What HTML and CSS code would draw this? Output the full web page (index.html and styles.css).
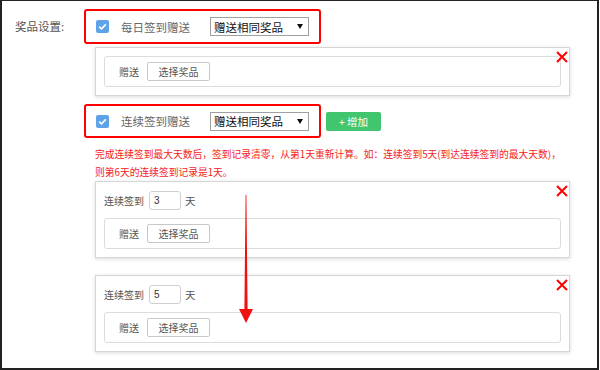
FILE: index.html
```html
<!DOCTYPE html>
<html lang="zh-CN">
<head>
  <meta charset="UTF-8">
  <meta name="viewport" content="width=device-width, initial-scale=1.0">
  <title>奖品设置</title>
  <link rel="stylesheet" href="styles.css">
</head>
<body>
  <div class="frame">
    <div class="setting">
      <div class="setting-label">奖品设置:</div>

      <div class="setting-body">
        <!-- Daily sign-in -->
        <div class="mark-row">
          <span class="check">
            <svg width="13" height="13" viewBox="0 0 13 13"><path d="M3.2 6.6 L5.5 8.8 L9.8 4.4" fill="none" stroke="#fff" stroke-width="1.6"/></svg>
          </span>
          <span class="mark-text">每日签到赠送</span>
          <div class="fake-select">
            <span>赠送相同奖品</span>
            <svg width="6" height="5" viewBox="0 0 6 5"><path d="M0 0 H6 L3 5 Z" fill="#111"/></svg>
          </div>
        </div>

        <div class="panel panel-first">
          <div class="gift-box">
            <span class="gift-label">赠送</span>
            <button class="pick-btn">选择奖品</button>
          </div>
          <span class="close">
            <svg width="12" height="12" viewBox="0 0 12 12"><path d="M1 1 L11 11 M11 1 L1 11" stroke="#f00" stroke-width="2"/></svg>
          </span>
        </div>

        <!-- Continuous sign-in -->
        <div class="row-with-add">
          <div class="mark-row mark-row-second">
            <span class="check">
              <svg width="13" height="13" viewBox="0 0 13 13"><path d="M3.2 6.6 L5.5 8.8 L9.8 4.4" fill="none" stroke="#fff" stroke-width="1.6"/></svg>
            </span>
            <span class="mark-text">连续签到赠送</span>
            <div class="fake-select">
              <span>赠送相同奖品</span>
              <svg width="6" height="5" viewBox="0 0 6 5"><path d="M0 0 H6 L3 5 Z" fill="#111"/></svg>
            </div>
          </div>
          <button class="add-btn">+ 增加</button>
        </div>

        <p class="tip">完成连续签到最大天数后，签到记录清零，从第1天重新计算。如：连续签到5天(到达连续签到的最大天数)，<br>则第6天的连续签到记录是1天。</p>

        <div class="panel">
          <div class="days-row">
            <span>连续签到</span>
            <span class="days-input">3</span>
            <span class="days-unit">天</span>
          </div>
          <div class="gift-box">
            <span class="gift-label">赠送</span>
            <button class="pick-btn">选择奖品</button>
          </div>
          <span class="close">
            <svg width="12" height="12" viewBox="0 0 12 12"><path d="M1 1 L11 11 M11 1 L1 11" stroke="#f00" stroke-width="2"/></svg>
          </span>
        </div>

        <div class="panel panel-last">
          <div class="days-row">
            <span>连续签到</span>
            <span class="days-input">5</span>
            <span class="days-unit">天</span>
          </div>
          <div class="gift-box">
            <span class="gift-label">赠送</span>
            <button class="pick-btn">选择奖品</button>
          </div>
          <span class="close">
            <svg width="12" height="12" viewBox="0 0 12 12"><path d="M1 1 L11 11 M11 1 L1 11" stroke="#f00" stroke-width="2"/></svg>
          </span>
        </div>
      </div>
    </div>

    <!-- annotation arrow drawn over the panels -->
    <svg class="arrow" width="600" height="370" viewBox="0 0 600 370">
      <polygon points="245.6,195 246.4,195 247.6,309 253,309 246,323 239,309 244.4,309" fill="#f01010"/>
    </svg>
  </div>
</body>
</html>
```

FILE: styles.css
```css
body {
  margin: 0;
  background: #fff;
  font-family: "Noto Sans CJK SC", "Noto Sans", sans-serif;
  color: #555;
}

/* Outer screenshot frame */
.frame {
  position: relative;
  width: 599px;
  height: 370px;
  box-sizing: border-box;
  border: 2px solid #222;
  border-top-width: 1px;
  overflow: hidden;
}

.setting {
  display: flex;
  padding-top: 8px;
}

.setting-label {
  width: 69px;
  padding-left: 13px;
  height: 35px;
  line-height: 35px;
  font-size: 11.5px;
  color: #555;
}

.setting-body {
  width: 490px;
}

/* Rows outlined in red */
.mark-row {
  display: flex;
  align-items: center;
  width: 237px;
  height: 35px;
  box-sizing: border-box;
  border: 2px solid #f00;
  border-radius: 3px;
  padding-left: 10px;
}

.mark-row-second {
  height: 34px;
}

.check {
  display: block;
  width: 13px;
  height: 13px;
  background: #5ea3e8;
  border-radius: 2px;
}

.check svg {
  display: block;
}

.mark-text {
  margin-left: 12px;
  font-size: 11.5px;
  line-height: 14px;
  color: #666;
}

.fake-select {
  display: flex;
  align-items: center;
  justify-content: space-between;
  margin-left: 20px;
  width: 99px;
  height: 19px;
  box-sizing: border-box;
  border: 1px solid #a0a0a0;
  padding: 0 5px 0 3px;
  font-size: 11.5px;
  line-height: 14px;
  color: #111;
}

.fake-select svg {
  display: block;
}

.row-with-add {
  display: flex;
  align-items: center;
  margin-top: 8px;
}

.add-btn {
  margin-left: 5px;
  width: 55px;
  height: 19px;
  padding: 0;
  border: none;
  border-radius: 2px;
  background: #41c66f;
  color: #fff;
  font-family: inherit;
  font-size: 10.5px;
  line-height: 19px;
}

/* Panels */
.panel {
  position: relative;
  margin-left: 11px;
  width: 475px;
  box-sizing: border-box;
  border: 1px solid #d6d6d6;
  box-shadow: 0 1px 4px rgba(0, 0, 0, 0.15);
  padding: 8px;
  background: #fff;
}

.panel-first {
  margin-top: 3px;
}

.panel-last {
  margin-top: 17px;
}

.close {
  position: absolute;
  top: 3px;
  right: 1px;
}

.close svg {
  display: block;
}

.gift-box {
  display: flex;
  align-items: center;
  height: 31px;
  box-sizing: border-box;
  border: 1px solid #dcdcdc;
  border-radius: 3px;
  padding-left: 14px;
}

.gift-label {
  font-size: 10px;
  line-height: 12px;
  color: #555;
}

.pick-btn {
  margin-left: 8px;
  width: 63px;
  height: 19px;
  padding: 0;
  border: 1px solid #c8c8c8;
  border-radius: 2px;
  background: #fff;
  color: #555;
  font-family: inherit;
  font-size: 10px;
  line-height: 17px;
}

.days-row {
  display: flex;
  align-items: center;
  height: 19px;
  margin-top: 1px;
  margin-bottom: 8px;
  font-size: 10px;
  line-height: 12px;
  color: #555;
}

.days-input {
  margin-left: 5px;
  width: 32px;
  height: 19px;
  box-sizing: border-box;
  border: 1px solid #cfcfcf;
  border-radius: 3px;
  padding-left: 4px;
  line-height: 17px;
  font-family: "Liberation Sans", sans-serif;
  color: #333;
}

.days-unit {
  margin-left: 4px;
  font-size: 10.5px;
}

/* Red hint text */
.tip {
  margin: 7px 0 0 11px;
  font-size: 9.75px;
  line-height: 18px;
  color: #f41c1c;
  white-space: nowrap;
}

.arrow {
  position: absolute;
  left: -2px;
  top: -1px;
  pointer-events: none;
}
```
